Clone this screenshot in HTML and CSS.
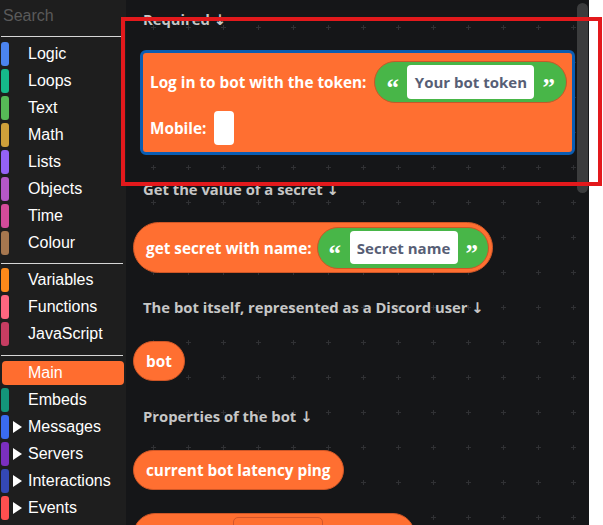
FILE: index.html
```html
<!DOCTYPE html>
<html lang="en">
<head>
<meta charset="utf-8">
<title>Blocks</title>
<link rel="stylesheet" href="styles.css">
</head>
<body>
<div class="app">
  <aside class="sidebar">
    <input class="search" type="text" placeholder="Search">
    <div class="rule rule-top"></div>
    <ul class="cats">
      <li class="cat"><span class="bar c-logic"></span><span class="name">Logic</span></li>
      <li class="cat"><span class="bar c-loops"></span><span class="name">Loops</span></li>
      <li class="cat"><span class="bar c-text"></span><span class="name">Text</span></li>
      <li class="cat"><span class="bar c-math"></span><span class="name">Math</span></li>
      <li class="cat"><span class="bar c-lists"></span><span class="name">Lists</span></li>
      <li class="cat"><span class="bar c-objects"></span><span class="name">Objects</span></li>
      <li class="cat"><span class="bar c-time"></span><span class="name">Time</span></li>
      <li class="cat"><span class="bar c-colour"></span><span class="name">Colour</span></li>
    </ul>
    <div class="rule rule-a"></div>
    <ul class="cats">
      <li class="cat"><span class="bar c-vars"></span><span class="name">Variables</span></li>
      <li class="cat"><span class="bar c-funcs"></span><span class="name">Functions</span></li>
      <li class="cat"><span class="bar c-js"></span><span class="name">JavaScript</span></li>
    </ul>
    <div class="rule rule-b"></div>
    <ul class="cats">
      <li class="cat cat-active"><span class="bar bar-none"></span><span class="name">Main</span></li>
      <li class="cat"><span class="bar c-embeds"></span><span class="name">Embeds</span></li>
      <li class="cat"><span class="bar c-msgs"></span><span class="arrow"></span><span class="name name-sub">Messages</span></li>
      <li class="cat"><span class="bar c-servers"></span><span class="arrow"></span><span class="name name-sub">Servers</span></li>
      <li class="cat"><span class="bar c-inter"></span><span class="arrow"></span><span class="name name-sub">Interactions</span></li>
      <li class="cat"><span class="bar c-events"></span><span class="arrow"></span><span class="name name-sub">Events</span></li>
    </ul>
  </aside>

  <main class="canvas">
    <div class="label label-1">Required ↓</div>

    <div class="block block-login">
      <div class="brow brow-1">
        <span class="btext">Log in to bot with the token:</span>
        <div class="str str-1">
          <span class="q">“</span>
          <span class="field field-1">Your bot token</span>
          <span class="q">”</span>
        </div>
      </div>
      <div class="brow brow-2">
        <span class="btext">Mobile:</span>
        <span class="check"></span>
      </div>
    </div>

    <div class="label label-2">Get the value of a secret ↓</div>

    <div class="pill pill-secret">
      <span class="btext">get secret with name:</span>
      <div class="str str-2">
        <span class="q">“</span>
        <span class="field field-2">Secret name</span>
        <span class="q">”</span>
      </div>
    </div>

    <div class="label label-3">The bot itself, represented as a Discord user ↓</div>

    <div class="pill pill-small pill-bot"><span class="btext">bot</span></div>

    <div class="label label-4">Properties of the bot ↓</div>

    <div class="pill pill-small pill-ping"><span class="btext">current bot latency ping</span></div>

    <div class="pill pill-last"><span class="slot"></span></div>

    <div class="scroll-thumb"></div>
  </main>

  <div class="highlight"></div>
</div>
</body>
</html>
```

FILE: styles.css
```css
* { box-sizing: border-box; }

html, body {
  margin: 0;
  padding: 0;
  background: #ffffff;
  height: 100%;
  overflow: hidden;
}

.app {
  position: relative;
  display: flex;
  width: 603px;
  height: 525px;
}

/* ---------- sidebar ---------- */
.sidebar {
  width: 126px;
  flex: 0 0 126px;
  height: 525px;
  background: #1e1e1e;
  font-family: "Liberation Sans", Arial, sans-serif;
  font-size: 16px;
  color: #ffffff;
  overflow: hidden;
  display: flex;
  flex-direction: column;
}

.search {
  display: block;
  flex: 0 0 32px;
  width: 122px;
  height: 32px;
  margin: 0;
  padding: 0 0 0 3px;
  border: none;
  outline: none;
  background: transparent;
  font-family: "Liberation Sans", Arial, sans-serif;
  font-size: 16px;
  color: #ffffff;
}
.search::placeholder { color: #5a5a5a; }

.rule {
  flex: 0 0 1px;
  height: 1px;
  background: #d6d6d6;
  margin-left: 1px;
}
.rule-top { width: 120px; margin-top: 4px; margin-bottom: 5px; }
.rule-a { width: 122px; margin-top: 5px; margin-bottom: 4px; }
.rule-b { width: 122px; margin-top: 6px; margin-bottom: 5px; }

.cats {
  list-style: none;
  margin: 0;
  padding: 0;
  flex: 0 0 auto;
}

.cat {
  display: flex;
  align-items: center;
  height: 24px;
  margin-bottom: 3px;
  white-space: nowrap;
}

.bar {
  flex: 0 0 8px;
  width: 8px;
  height: 24px;
  margin-left: 1px;
  border-radius: 3px;
}
.bar-none { background: transparent; }

.name { margin-left: 19px; line-height: 24px; }
.name-sub { margin-left: 6px; }

.arrow {
  flex: 0 0 auto;
  width: 0;
  height: 0;
  margin-left: 4px;
  border-left: 9px solid #ffffff;
  border-top: 6px solid transparent;
  border-bottom: 6px solid transparent;
}

.cat-active {
  background: #ff6d2f;
  border-radius: 4px;
  margin-left: 2px;
  width: 122px;
}
.cat-active .bar { margin-left: 0; }
.cat-active .name { margin-left: 18px; }

.c-logic { background: #4b84f0; }
.c-loops { background: #15b98a; }
.c-text { background: #56b956; }
.c-math { background: #cfa03a; }
.c-lists { background: #9462f5; }
.c-objects { background: #b457c6; }
.c-time { background: #d44b9a; }
.c-colour { background: #a6774f; }
.c-vars { background: #ff8a1a; }
.c-funcs { background: #ff6680; }
.c-js { background: #c63d62; }
.c-embeds { background: #13957a; }
.c-msgs { background: #3a6bf0; }
.c-servers { background: #7b2fbf; }
.c-inter { background: #3448b5; }
.c-events { background: #ff4f4f; }

/* ---------- canvas ---------- */
.canvas {
  position: relative;
  width: 463px;
  flex: 0 0 463px;
  height: 525px;
  overflow: hidden;
  background-color: #151618;
  background-image: url("data:image/svg+xml,%3Csvg xmlns='http://www.w3.org/2000/svg' width='35' height='35'%3E%3Cpath d='M15 17.5h5M17.5 15v5' stroke='%23303134' stroke-width='1'/%3E%3C/svg%3E");
  background-position: 10px 10px;
  background-repeat: repeat;
  display: flex;
  flex-direction: column;
  align-items: flex-start;
  font-family: "Open Sans", "Noto Sans", "DejaVu Sans", sans-serif;
  font-weight: 700;
  font-size: 15px;
  color: #ffffff;
}
.canvas > * { flex-shrink: 0; }

.label {
  margin-left: 17px;
  height: 20px;
  line-height: 20px;
  font-size: 14.8px;
  color: #c6c6c6;
  white-space: nowrap;
}
.label-1 { margin-top: 9px; }
.label-2 { margin-top: 24px; }
.label-3 { margin-top: 24px; }
.label-4 { margin-top: 25px; }

.btext { white-space: nowrap; line-height: 20px; font-size: 15.3px; }

.block-login {
  margin-top: 21px;
  margin-left: 14px;
  width: 435px;
  height: 105px;
  background: #ff6f31;
  border: 3px solid #0a5db3;
  border-radius: 6px;
  padding: 8px 0 0 7px;
  display: flex;
  flex-direction: column;
  gap: 8px;
}

.brow {
  display: flex;
  align-items: center;
  gap: 8px;
}

.str {
  flex: 0 0 auto;
  display: flex;
  align-items: center;
  height: 42px;
  background: #48b648;
  border: 1px solid #c4592a;
  border-radius: 21px;
}
.str-1 { width: 193px; padding: 0 0 0 11px; }
.str-2 { width: 172px; padding: 0 0 0 11px; }

.q {
  width: 12px;
  height: 42px;
  font-family: "Liberation Serif", "DejaVu Serif", serif;
  font-weight: 700;
  font-size: 25px;
  line-height: 42px;
  padding-top: 6px;
  text-align: center;
  color: #ffffff;
}

.field {
  display: flex;
  align-items: center;
  justify-content: center;
  height: 34px;
  background: #ffffff;
  border-radius: 4px;
  color: #575e75;
  white-space: nowrap;
  margin: 0 8px 0 9px;
}
.field-1 { width: 127px; }
.field-2 { width: 108px; height: 33px; }

.check {
  width: 20px;
  height: 34px;
  background: #ffffff;
  border-radius: 4px;
}

.pill {
  margin-left: 7px;
  display: flex;
  align-items: center;
  background: #ff6f31;
  border: 1px solid #cf5626;
}

.pill-secret {
  margin-top: 23px;
  width: 360px;
  height: 51px;
  border-radius: 26px;
  padding: 0 4px 0 12px;
  gap: 5px;
}
.pill-secret .str { border-color: #cf5626; }

.pill-small {
  height: 40px;
  border-radius: 20px;
  padding: 0 12px;
}
.pill-bot { margin-top: 24px; }
.pill-ping { margin-top: 24px; }

.pill-last {
  margin-top: 23px;
  width: 282px;
  height: 44px;
  border-radius: 22px;
  align-items: flex-start;
  padding: 3px 0 0 99px;
}
.slot {
  width: 90px;
  height: 34px;
  border: 1px solid #d3562a;
  border-radius: 5px;
}

.scroll-thumb {
  position: absolute;
  left: 451px;
  top: 3px;
  width: 11px;
  height: 190px;
  border-radius: 6px;
  background: #3b3c3d;
}

/* annotation overlay */
.highlight {
  position: absolute;
  left: 121px;
  top: 17px;
  width: 481px;
  height: 169px;
  border: 4px solid #e3191c;
  pointer-events: none;
}
```
